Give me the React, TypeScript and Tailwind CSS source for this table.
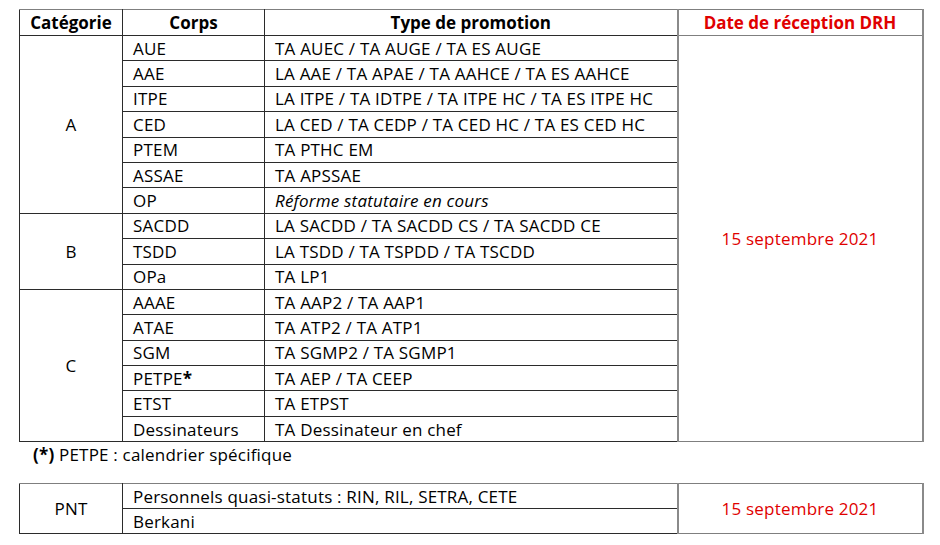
const RED = 'text-[#e00000]';

const groups = [
  {
    cat: 'A',
    rows: [
      { corps: 'AUE', type: 'TA AUEC / TA AUGE / TA ES AUGE' },
      { corps: 'AAE', type: 'LA AAE / TA APAE / TA AAHCE / TA ES AAHCE' },
      { corps: 'ITPE', type: 'LA ITPE / TA IDTPE / TA ITPE HC / TA ES ITPE HC' },
      { corps: 'CED', type: 'LA CED / TA CEDP / TA CED HC / TA ES CED HC' },
      { corps: 'PTEM', type: 'TA PTHC EM' },
      { corps: 'ASSAE', type: 'TA APSSAE' },
      { corps: 'OP', type: 'Réforme statutaire en cours', italic: true },
    ],
  },
  {
    cat: 'B',
    rows: [
      { corps: 'SACDD', type: 'LA SACDD / TA SACDD CS / TA SACDD CE' },
      { corps: 'TSDD', type: 'LA TSDD / TA TSPDD / TA TSCDD' },
      { corps: 'OPa', type: 'TA LP1' },
    ],
  },
  {
    cat: 'C',
    rows: [
      { corps: 'AAAE', type: 'TA AAP2 / TA AAP1' },
      { corps: 'ATAE', type: 'TA ATP2 / TA ATP1' },
      { corps: 'SGM', type: 'TA SGMP2 / TA SGMP1' },
      { corps: 'PETPE', star: true, type: 'TA AEP / TA CEEP' },
      { corps: 'ETST', type: 'TA ETPST' },
      { corps: 'Dessinateurs', type: 'TA Dessinateur en chef' },
    ],
  },
];

const totalRows = groups.reduce((n, g) => n + g.rows.length, 0);

const cell = 'border border-[#2b2b2b] px-[10px] text-left align-middle';
const dateCell =
  'border-y border-y-[#7f7f7f] border-x-2 border-x-[#8a8a8a] text-center align-middle';

export default function App() {
  return (
    <div
      className="w-[940px] h-[545px] bg-white pt-[9px] pl-[19px] text-[17px] leading-none tracking-[0.2px] text-black"
      style={{ fontFamily: '"Open Sans", "Noto Sans", sans-serif' }}
    >
      <table className="border-collapse table-fixed w-[903px]">
        <colgroup>
          <col className="w-[103px]" />
          <col className="w-[142px]" />
          <col className="w-[413px]" />
          <col className="w-[245px]" />
        </colgroup>
        <thead>
          <tr className="h-[26px] font-bold tracking-normal">
            <th className="border border-[#2b2b2b] border-t-[#7f7f7f] text-center">Catégorie</th>
            <th className="border border-[#2b2b2b] border-t-[#7f7f7f] text-center">Corps</th>
            <th className="border border-[#2b2b2b] border-t-[#7f7f7f] text-center">Type de promotion</th>
            <th className={`${dateCell} ${RED}`}>Date de réception DRH</th>
          </tr>
        </thead>
        <tbody>
          {groups.map((g, gi) =>
            g.rows.map((r, ri) => (
              <tr key={r.corps} className="h-[25.4px]">
                {ri === 0 && (
                  <td rowSpan={g.rows.length} className="border border-[#2b2b2b] text-center align-middle">
                    {g.cat}
                  </td>
                )}
                <td className={cell}>
                  {r.corps}
                  {r.star && <span className="font-bold">*</span>}
                </td>
                <td className={`${cell} ${r.italic ? 'italic' : ''}`}>{r.type}</td>
                {gi === 0 && ri === 0 && (
                  <td rowSpan={totalRows} className={`${dateCell} ${RED}`}>
                    15 septembre 2021
                  </td>
                )}
              </tr>
            )),
          )}
        </tbody>
      </table>

      <p className="mt-[4px] pl-[14px]">
        <span className="font-bold">(*)</span> PETPE : calendrier spécifique
      </p>

      <table className="mt-[20px] border-collapse table-fixed w-[903px]">
        <colgroup>
          <col className="w-[103px]" />
          <col className="w-[555px]" />
          <col className="w-[245px]" />
        </colgroup>
        <tbody>
          <tr className="h-[25px]">
            <td rowSpan={2} className="border border-[#2b2b2b] border-t-[#7f7f7f] text-center align-middle">
              PNT
            </td>
            <td className={`${cell} border-t-[#7f7f7f]`}>Personnels quasi-statuts : RIN, RIL, SETRA, CETE</td>
            <td rowSpan={2} className={`${dateCell} ${RED}`}>
              15 septembre 2021
            </td>
          </tr>
          <tr className="h-[25px]">
            <td className={cell}>Berkani</td>
          </tr>
        </tbody>
      </table>
    </div>
  );
}
